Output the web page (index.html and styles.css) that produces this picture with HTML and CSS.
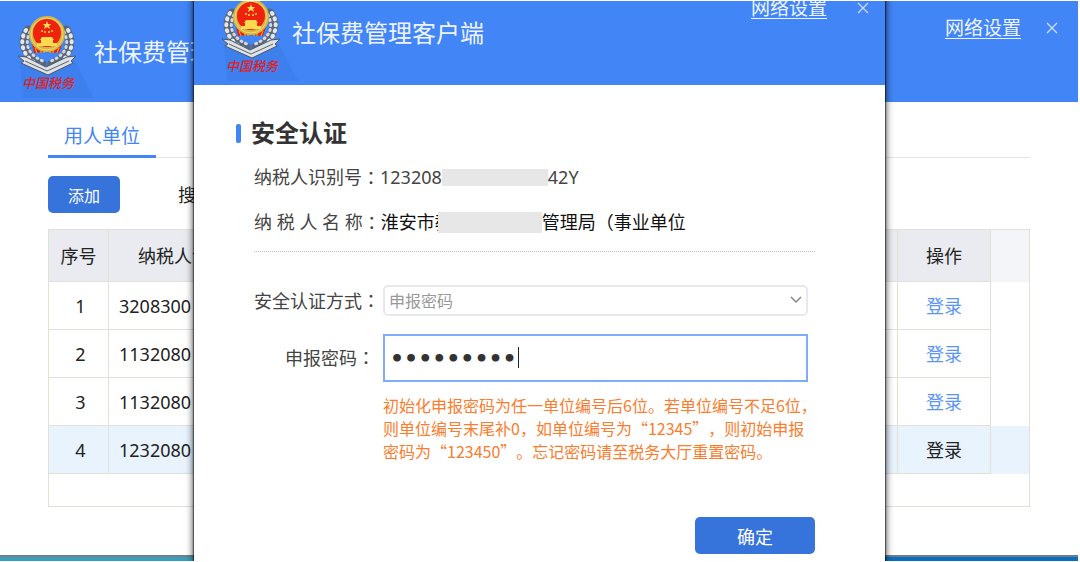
FILE: index.html
```html
<!DOCTYPE html>
<html lang="zh-CN">
<head>
    <meta charset="UTF-8">
    <meta name="viewport" content="width=device-width, initial-scale=1.0">
    <title>社保费管理客户端</title>
    <link rel="stylesheet" href="styles.css">
</head>
<body>
    <svg class="sprite" aria-hidden="true">
        <symbol id="logo" viewBox="0 0 76 84">
            <path d="M2 46L5 83H76L57 46z" fill="#3d7fec"/>
            <!-- wheat ears -->
            <g fill="none" stroke-linecap="round">
                <path d="M10 15C2 27 7 43 24 49M48 15C56 27 51 43 34 49" stroke="#59677c" stroke-width="9"/>
                <path d="M8 15C0 27 5 44 23 51M50 15C58 27 53 44 35 51" stroke="#e4e7ea" stroke-width="4" stroke-dasharray="1 5"/>
                <path d="M12 17C6 29 10 40 25 46M46 17C52 29 48 40 33 46" stroke="#d5d9dd" stroke-width="3" stroke-dasharray="1 4"/>
            </g>
            <!-- ribbon -->
            <path d="M0 41L8 42L28 52L49 42L58 41L53 46L55 48L30 60L3 48L6 46z" fill="#dfe2e4" stroke="#4d5765" stroke-width="1"/>
            <path d="M7 46L29 56L51 46" fill="none" stroke="#59636f" stroke-width="1"/>
            <!-- emblem -->
            <path d="M14 29L16 38L28 37L41 38L44 29z" fill="#e3200f"/>
            <circle cx="29" cy="19" r="18" fill="#d5b442"/>
            <circle cx="29" cy="19" r="16" fill="none" stroke="#efd873" stroke-width="1"/>
            <circle cx="29" cy="18" r="14" fill="#ee220d"/>
            <path d="M29 6L30 9H33L31 11L32 14L29 12L26 14L27 11L25 9H28z" fill="#ffe35a"/>
            <g fill="#ffd94e">
                <circle cx="24" cy="16" r="1"/>
                <circle cx="27" cy="17" r="1"/>
                <circle cx="31" cy="17" r="1"/>
                <circle cx="34" cy="16" r="1"/>
                <path d="M24 22H34L36 25H22zM23 25H35V28H39V31H19V28H23z"/>
            </g>
            <path d="M17 33L19 38M23 35V38M26 35V38M32 35V38M35 35V38M41 33L39 38" stroke="#e8b932" stroke-width="1"/>
            <text class="logo-text" x="4" y="73">中国税务</text>
        </symbol>
        <symbol id="close" viewBox="0 0 12 12">
            <path d="M1 1L11 11M11 1L1 11" fill="none" stroke="#cfdcf0" stroke-width="1.3"/>
        </symbol>
    </svg>

    <div class="desktop">
        <div class="window">
            <header class="header">
                <svg class="logo" role="img" aria-label="中国税务"><use href="#logo"/></svg>
                <div class="title">社保费管理客户端</div>
                <div class="header-tools">
                    <a class="network" href="#">网络设置</a>
                    <button class="close" type="button" aria-label="关闭"><svg><use href="#close"/></svg></button>
                </div>
            </header>

            <div class="content">
                <nav class="tabs"><a class="tab" href="#">用人单位</a></nav>
                <div class="toolbar">
                    <button class="button" type="button">添加</button>
                    <span class="search">搜索</span>
                </div>
                <div class="grid">
                    <table class="units">
                        <colgroup>
                            <col class="col-no">
                            <col class="col-id">
                            <col>
                            <col class="col-action">
                            <col class="col-end">
                        </colgroup>
                        <thead>
                            <tr><th>序号</th><th>纳税人识别号</th><th></th><th>操作</th><th></th></tr>
                        </thead>
                        <tbody>
                            <tr><td>1</td><td class="tax-id">3208300</td><td></td><td><a href="#">登录</a></td><td></td></tr>
                            <tr><td>2</td><td class="tax-id">1132080</td><td></td><td><a href="#">登录</a></td><td></td></tr>
                            <tr><td>3</td><td class="tax-id">1132080</td><td></td><td><a href="#">登录</a></td><td></td></tr>
                            <tr class="selected"><td>4</td><td class="tax-id">1232080</td><td></td><td><a href="#">登录</a></td><td></td></tr>
                        </tbody>
                    </table>
                </div>
            </div>
        </div>

        <div class="dialog" role="dialog" aria-labelledby="dialog-title">
            <header class="header">
                <svg class="logo" role="img" aria-label="中国税务"><use href="#logo"/></svg>
                <div class="title">社保费管理客户端</div>
                <div class="header-tools">
                    <a class="network" href="#">网络设置</a>
                    <button class="close" type="button" aria-label="关闭"><svg><use href="#close"/></svg></button>
                </div>
            </header>

            <form class="auth">
                <h1 class="auth-title" id="dialog-title">安全认证</h1>
                <div class="auth-main">
                    <div class="info">
                        <div class="info-row">纳税人识别号<span class="mark" lang="zh-TW">：</span>123208<span class="mask mask-id"></span>42Y</div>
                        <div class="info-row">纳 税 人 名 称<span class="mark" lang="zh-TW">：</span><span class="name">淮安市教<span class="mask mask-name"></span>管理局（事业单位</span></div>
                    </div>

                    <div class="field">
                        <label class="label" for="method">安全认证方式<span class="mark" lang="zh-TW">：</span></label>
                        <div class="select-box">
                            <select class="select" id="method"><option>申报密码</option></select>
                            <svg class="arrow" viewBox="0 0 12 8"><path d="M1 1L6 6L11 1" fill="none" stroke="#888" stroke-width="1.5"/></svg>
                        </div>
                    </div>
                    <div class="field field-password">
                        <label class="label" for="password">申报密码<span class="mark" lang="zh-TW">：</span></label>
                        <div class="password-box">
                            <input class="password" id="password" type="password" value="123456789">
                            <span class="caret"></span>
                        </div>
                    </div>
                    <p class="hint">初始化申报密码为任一单位编号后6位。若单位编号不足6位，<br>则单位编号末尾补0，如单位编号为“12345”，则初始申报<br>密码为“123450”。忘记密码请至税务大厅重置密码。</p>
                    <div class="actions">
                        <button class="button button-ok" type="button">确定</button>
                    </div>
                </div>
            </form>
        </div>
    </div>
</body>
</html>
```
FILE: styles.css
```css
* {
    box-sizing: border-box;
}

body {
    margin: 0;
    padding: 1px 2px 0 0;
    background-color: #fff;
    color: #222;
    font-family: "Noto Sans", "Noto Sans CJK SC", sans-serif;
    font-size: 18px;
    line-height: 24px;
    text-spacing-trim: space-all;
}

.sprite {
    position: absolute;
    width: 0;
    height: 0;
}

.desktop {
    position: relative;
    overflow: hidden;
    padding-bottom: 4px;
    background: linear-gradient(to right, #38a0bd 18%, #0a6fc0 82%);
}

.window {
    background-color: #fff;
    border-bottom: 2px solid #6f7f85;
}

/* header */
.header {
    display: flex;
    align-items: flex-start;
    height: 101px;
    padding-left: 18px;
    background-color: #4285f6;
    color: #eef4ff;
}

.logo {
    flex: none;
    width: 76px;
    height: 84px;
    margin-top: 14px;
}

.logo-text {
    font-family: "Noto Sans CJK SC", sans-serif;
    font-size: 13px;
    font-style: italic;
    font-weight: 500;
    fill: #e01e1e;
}

.title {
    padding-top: 33px;
    font-size: 24px;
    line-height: 36px;
    white-space: nowrap;
}

.header-tools {
    display: flex;
    align-items: center;
    gap: 25px;
    margin-left: auto;
    padding: 14px 20px 0 0;
}

.network {
    color: #eef4ff;
    font-size: 19px;
    line-height: 26px;
    text-underline-offset: 3px;
}

.close {
    display: flex;
    width: 12px;
    height: 12px;
    padding: 0;
    border: none;
    background: none;
    cursor: pointer;
}

.close svg {
    width: 12px;
    height: 12px;
}

/* main window */
.content {
    padding: 16px 48px 48px;
}

.tabs {
    display: flex;
    border-bottom: 1px solid #e4e4e4;
}

.tab {
    margin-bottom: -1px;
    padding: 0 16px;
    border-bottom: 3px solid #4285f6;
    color: #4285f6;
    font-size: 19px;
    line-height: 37px;
    text-decoration: none;
}

.toolbar {
    display: flex;
    align-items: center;
    gap: 58px;
    margin: 18px 0 16px;
}

.button {
    width: 72px;
    height: 37px;
    padding: 0;
    border: none;
    border-radius: 5px;
    background-color: #3674dc;
    color: #fff;
    font-family: inherit;
    font-size: 16px;
    cursor: pointer;
}

.grid {
    min-height: 278px;
    border: 1px solid #e0e2d8;
}

.units {
    width: 100%;
    border-collapse: separate;
    border-spacing: 0;
    table-layout: fixed;
}

.col-no {
    width: 60px;
}

.col-id {
    width: 167px;
}

.col-action {
    width: 93px;
}

.col-end {
    width: 38px;
}

.units th,
.units td {
    height: 48px;
    padding: 0;
    border-right: 1px solid #e0e2d8;
    border-bottom: 1px solid #e0e2d8;
    text-align: center;
}

.units th {
    height: 52px;
    background-color: #e9ebf0;
    font-weight: normal;
}

.units th:last-child,
.units td:last-child {
    border: none;
}

.units th:last-child {
    background-color: #f3f5f9;
}

.units td:first-child {
    padding-left: 4px;
}

.units .tax-id {
    padding-left: 10px;
    text-align: left;
}

.units a {
    color: #5b95f7;
    text-decoration: none;
}

.selected {
    background-color: #e8f3fe;
}

.units .selected a {
    color: #222;
}

/* dialog */
.dialog {
    position: absolute;
    top: -17px;
    right: 17.9%;
    bottom: 0;
    left: 18%;
    background-color: #fff;
    box-shadow: 0 0 1px 1px rgba(0, 0, 0, 0.45), 0 0 7px 1px rgba(0, 0, 0, 0.7);
}

.dialog .header {
    padding-left: 28px;
}

.dialog .logo {
    margin-right: -6px;
}

.dialog .title {
    padding-top: 31px;
}

.dialog .header-tools {
    gap: 30px;
    padding: 11px 16px 0 0;
}

.auth {
    padding: 31px 70px 0 42px;
}

.auth-title {
    display: flex;
    align-items: center;
    gap: 10px;
    margin: 0 0 15px;
    color: #333;
    font-size: 24px;
    line-height: 34px;
}

.auth-title::before {
    content: "";
    width: 5px;
    height: 19px;
    border-radius: 2px;
    background-color: #4285f6;
}

.auth-main {
    padding-left: 18px;
    color: #444;
}

.info {
    display: flex;
    flex-direction: column;
    gap: 21px;
    margin-bottom: 33px;
    padding-bottom: 17px;
    border-bottom: 1px dotted #bbb;
}

.info-row {
    display: flex;
    align-items: center;
    white-space: pre;
}

.name {
    display: flex;
    align-items: center;
    color: #111;
}

/* centred full-width colon */
.mark {
    font-family: "Noto Sans CJK TC", sans-serif;
    line-height: 1;
}

.mask {
    background-color: #e7e7e7;
}

.mask-id {
    width: 106px;
    height: 17px;
}

.mask-name {
    width: 104px;
    height: 21px;
    margin-left: -15px;
}

.field {
    display: flex;
    align-items: center;
}

.label {
    flex: none;
    width: 129px;
}

.select-box,
.password-box {
    position: relative;
    flex: 1;
    margin-right: 7px;
}

.select {
    display: block;
    width: 100%;
    height: 31px;
    padding: 0 4px;
    border: 2px solid #e7e9ee;
    border-radius: 5px;
    background-color: #fff;
    color: #999;
    font-family: inherit;
    font-size: 16px;
    appearance: none;
}

.arrow {
    position: absolute;
    top: 11px;
    right: 6px;
    width: 12px;
    height: 8px;
    pointer-events: none;
}

.field-password {
    margin-top: 18px;
}

.field-password .label {
    padding-right: 8px;
    text-align: right;
}

.password {
    display: block;
    width: 100%;
    height: 48px;
    padding: 0 5px;
    border: 2px solid #7fabf9;
    background-color: #fff;
    color: #333;
    font-family: "DejaVu Sans", sans-serif;
    font-size: 22px;
    font-weight: bold;
    outline: none;
}

.caret {
    position: absolute;
    top: 13px;
    left: 135px;
    width: 1px;
    height: 21px;
    background-color: #222;
}

.hint {
    margin: 12px 0 54px 129px;
    color: #fb7c2c;
    font-family: "Noto Sans CJK SC", sans-serif;
    font-size: 16px;
    line-height: 23px;
    white-space: nowrap;
}

.actions {
    display: flex;
    justify-content: flex-end;
}

.button-ok {
    width: 120px;
    font-size: 18px;
}
```
